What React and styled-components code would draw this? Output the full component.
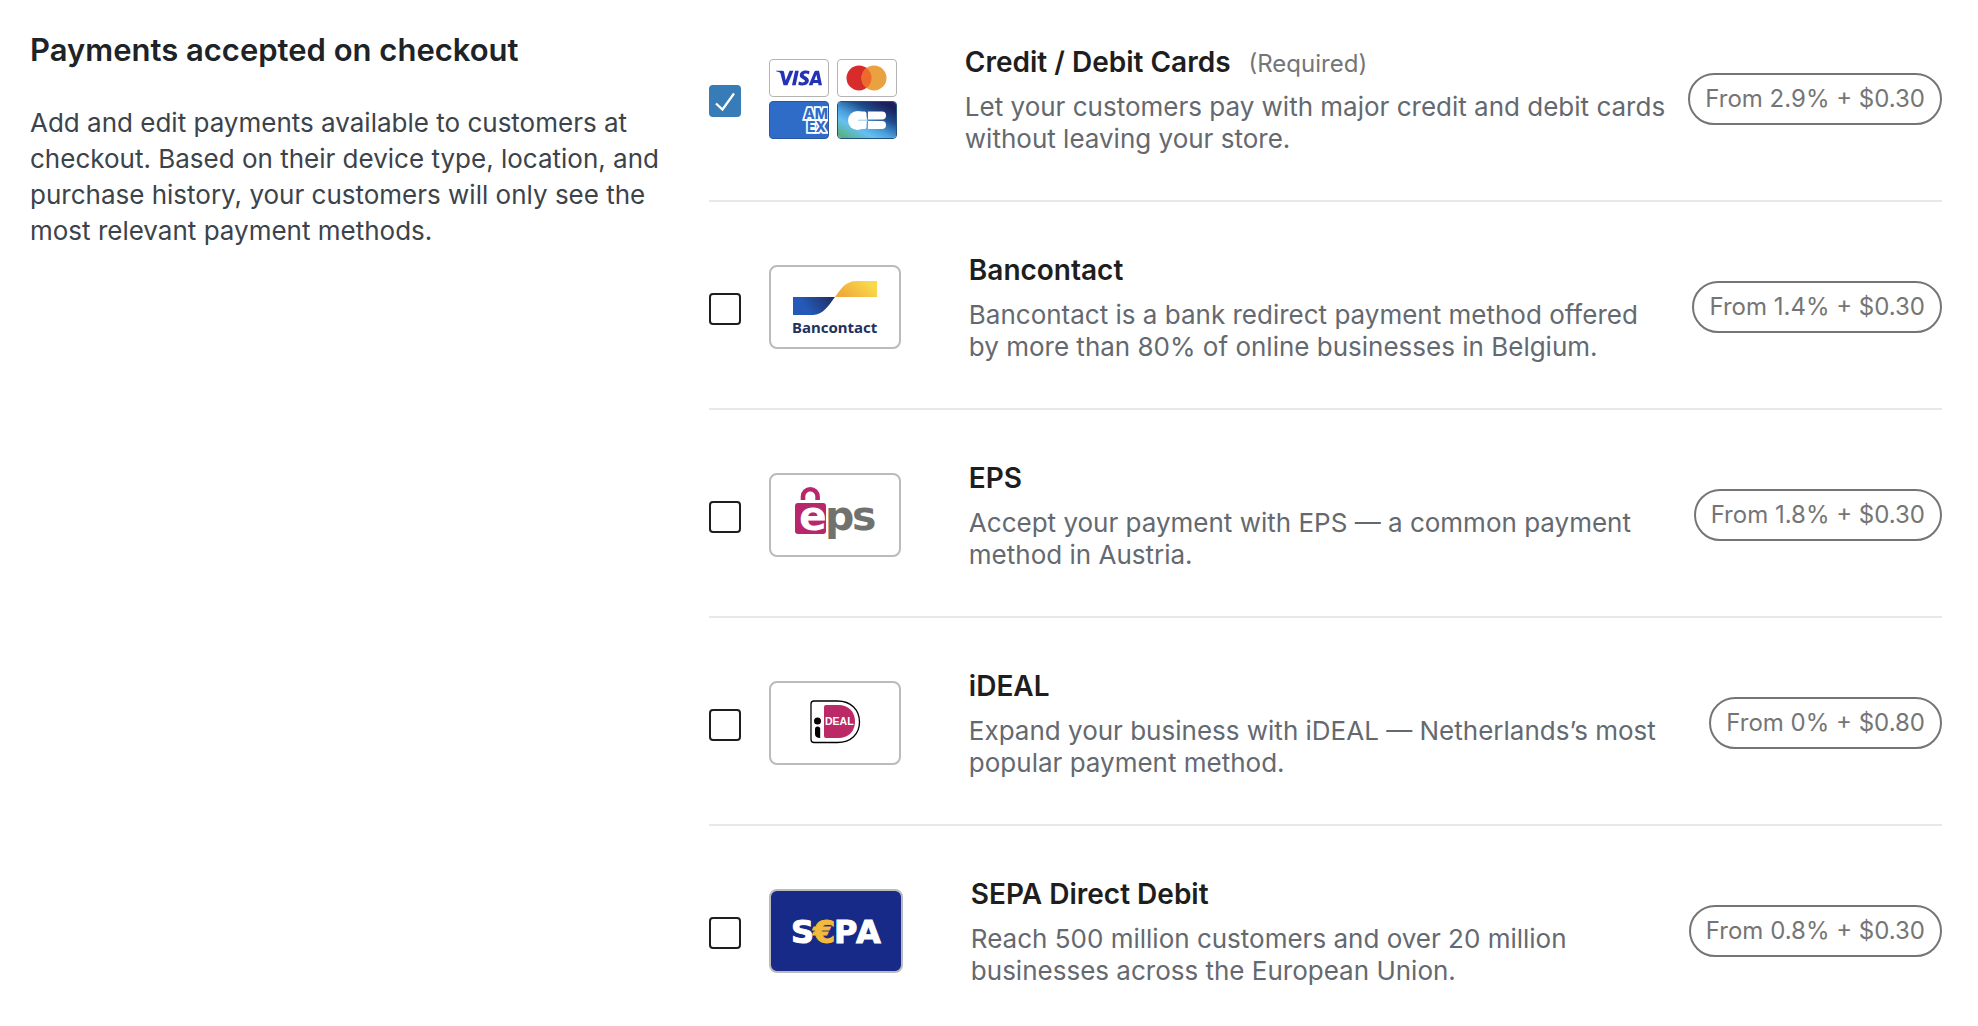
import React, { useState } from 'react';
import styled, { createGlobalStyle } from 'styled-components';
import { SiVisa } from 'react-icons/si';

const GlobalStyle = createGlobalStyle`
  *, *::before, *::after { box-sizing: border-box; }
  body {
    margin: 0;
    background: #fff;
    font-family: Inter, "Liberation Sans", sans-serif;
  }
`;

const Page = styled.main`
  display: grid;
  grid-template-columns: minmax(0, 33fr) minmax(0, 64fr);
  column-gap: 43px;
  padding: 0 36px 0 30px;
`;

const Intro = styled.section`
  padding-top: 28px;
`;

const Heading = styled.h2`
  margin: 0;
  font-size: 31px;
  font-weight: 600;
  line-height: 44px;
  color: #1d2327;
`;

const Lead = styled.p`
  margin: 33px 0 0;
  font-size: 26px;
  line-height: 36px;
  color: #3c434a;
`;

const MethodList = styled.ul`
  margin: 0;
  padding: 0;
  list-style: none;
`;

const MethodRow = styled.li`
  display: flex;
  align-items: center;
  padding: 48px 0 45px;
  border-bottom: 2px solid #e8e8e8;

  &:first-child { padding-top: 42px; }
  &:last-child { padding-bottom: 0; border-bottom: 0; }
`;

const CheckboxWrap = styled.span`
  display: grid;
  flex: none;
  margin: 5px 28px 0 0;

  & > * { grid-area: 1 / 1; }
`;

const Checkbox = styled.input`
  appearance: none;
  width: 32px;
  height: 32px;
  margin: 0;
  border: 2px solid #1e1e1e;
  border-radius: 4px;
  background: #fff;
  cursor: pointer;

  &:checked {
    border-color: #377cb6;
    background: #377cb6;
  }
`;

const CheckMark = styled.svg`
  width: 32px;
  height: 32px;
  pointer-events: none;
`;

const Tile = styled.span`
  flex: none;
  display: block;
  width: ${(p) => (p.$wide ? 134 : 132)}px;
  height: 84px;
  border: 2px solid #bbb;
  border-radius: 8px;
  overflow: hidden;
  background: ${(p) => p.$background || '#fff'};
`;

const TileArt = styled.svg`
  display: block;
  width: 100%;
  height: 100%;
`;

const CardGrid = styled.span`
  flex: none;
  display: grid;
  grid-template-columns: 60px 60px;
  grid-auto-rows: 38px;
  gap: 4px 8px;
`;

const Card = styled.span`
  display: flex;
  align-items: center;
  justify-content: center;
  border: 1px solid ${(p) => p.$border || '#b4b4b4'};
  border-radius: 4px;
  overflow: hidden;
  background: ${(p) => p.$background || '#fff'};
`;

const CardArt = styled.svg`
  display: block;
  width: 100%;
  height: 100%;
`;

const Details = styled.div`
  flex: 1;
  min-width: 0;
  margin: 0 20px 0 68px;
`;

const TitleLine = styled.div`
  display: flex;
  align-items: baseline;
  gap: 18px;
  line-height: 40px;
`;

const Title = styled.label`
  font-size: 28px;
  font-weight: 600;
  color: #1e1e1e;
  cursor: pointer;
`;

const Required = styled.span`
  font-size: 24px;
  line-height: 32px;
  color: #757575;
`;

const Description = styled.p`
  margin: 9px 0 0;
  font-size: 26px;
  line-height: 32px;
  color: #646970;
`;

const Fee = styled.span`
  flex: none;
  padding: 0 15px;
  border: 2px solid #757575;
  border-radius: 26px;
  font-size: 24px;
  line-height: 48px;
  white-space: nowrap;
  color: #757575;
`;

function CardsLogo() {
  return (
    <CardGrid aria-hidden="true">
      <Card>
        <SiVisa size={46} color="#2433b5" />
      </Card>
      <Card>
        <CardArt viewBox="1 1 58 36">
          <clipPath id="mc-left">
            <circle cx="22" cy="19" r="12.5" />
          </clipPath>
          <circle cx="22" cy="19" r="12.5" fill="#d82b2b" />
          <circle cx="37" cy="19" r="12.5" fill="#eaa13f" />
          <circle cx="37" cy="19" r="12.5" fill="#ec6a2c" clipPath="url(#mc-left)" />
        </CardArt>
      </Card>
      <Card $background="#2f6cc8" $border="#2858a4">
        <CardArt viewBox="1 1 58 36">
          <text
            fill="#2f6cc8"
            stroke="#fff"
            strokeWidth="3.4"
            paintOrder="stroke"
            fontFamily="Inter, sans-serif"
            fontWeight="800"
            fontSize="14"
          >
            <tspan x="35" y="18">AM</tspan>
            <tspan x="38" y="31">EX</tspan>
          </text>
        </CardArt>
      </Card>
      <Card $border="#24507f">
        <CardArt viewBox="1 1 58 36">
          <defs>
            <linearGradient id="cb-sky" gradientUnits="userSpaceOnUse" x1="14" y1="43" x2="38" y2="-2">
              <stop offset="0.06" stopColor="#58b184" />
              <stop offset="0.32" stopColor="#66c0f2" />
              <stop offset="0.5" stopColor="#4a9fdb" />
              <stop offset="0.76" stopColor="#1f4c8c" />
              <stop offset="1" stopColor="#1c1f5e" />
            </linearGradient>
          </defs>
          <rect width="60" height="38" fill="url(#cb-sky)" />
          <circle cx="20.5" cy="19.5" r="9.5" fill="#fff" />
          <rect x="20" y="10.5" width="9.5" height="17.5" rx="2" fill="#fff" />
          <path d="M31 10.5h14a4 4 0 0 1 0 8H31z" fill="#fff" />
          <path d="M31 20h14a4 4 0 0 1 0 8H31z" fill="#fff" />
          <rect x="21" y="18.7" width="10" height="1" fill="#8fcdf2" />
        </CardArt>
      </Card>
    </CardGrid>
  );
}

function BancontactLogo() {
  return (
    <Tile aria-hidden="true">
      <TileArt viewBox="2 2 128 80">
        <defs>
          <linearGradient id="bc-blue" x1="0" y1="0.3" x2="1" y2="0">
            <stop offset="0.2" stopColor="#2459b8" />
            <stop offset="1" stopColor="#1f2d5c" />
          </linearGradient>
          <linearGradient id="bc-yellow" x1="0" y1="0.4" x2="1" y2="0">
            <stop offset="0" stopColor="#efac3c" />
            <stop offset="0.8" stopColor="#f9d94a" />
          </linearGradient>
        </defs>
        <path d="M24 32H66C60 40 54 50 44 50H24z" fill="url(#bc-blue)" />
        <path d="M66 32C72 24 76 16 88 16H108V32z" fill="url(#bc-yellow)" />
        <text x="23" y="68" fontFamily="'Noto Sans', sans-serif" fontWeight="700" fontSize="15" fill="#22325f">
          Bancontact
        </text>
      </TileArt>
    </Tile>
  );
}

function EpsLogo() {
  return (
    <Tile aria-hidden="true">
      <TileArt viewBox="2 2 128 80">
        <path d="M34 27V23.5a7.3 7.3 0 0 1 14.6 0V27" fill="none" stroke="#b8266c" strokeWidth="4.6" />
        <rect x="26" y="30" width="31" height="31" rx="3" fill="#b8266c" />
        <text y="57" fontFamily="'DejaVu Sans', sans-serif" fontWeight="700" fontSize="41" fill="#71716f">
          <tspan x="30" fill="#fff">e</tspan>
          <tspan x="56">p</tspan>
          <tspan x="83">s</tspan>
        </text>
      </TileArt>
    </Tile>
  );
}

function IdealLogo() {
  return (
    <Tile aria-hidden="true">
      <TileArt viewBox="2 2 128 80">
        <path
          d="M45 20H68.500C82 20 90.500 29 90.500 41S82 61.500 68.500 61.500H45A3 3 0 0 1 42 58.500V23A3 3 0 0 1 45 20z"
          fill="#fff"
          stroke="#000"
          strokeWidth="1.300"
        />
        <path d="M57 24H69C80 24 86 31 86 40.500S80 57 69 57H57A2 2 0 0 1 55 55V26A2 2 0 0 1 57 24z" fill="#bb2a66" />
        <circle cx="48.500" cy="40" r="3.500" fill="#000" />
        <path d="M46 48A2.500 2.500 0 0 1 51.200 48V57C48 57 46 55.500 46 53z" fill="#000" />
        <text x="56" y="44" fontFamily="'Liberation Sans', sans-serif" fontWeight="700" fontSize="10.500" fill="#fff">
          DEAL
        </text>
      </TileArt>
    </Tile>
  );
}

function SepaLogo() {
  return (
    <Tile $wide $background="#172a87" aria-hidden="true">
      <TileArt viewBox="2 2 130 80">
        <text
          y="54"
          fontFamily="'DejaVu Sans', sans-serif"
          fontWeight="700"
          fontSize="32"
          fill="#fff"
          stroke="#fff"
          strokeWidth="1"
        >
          <tspan x="22">S</tspan>
          <tspan x="44" fill="#f2b93b" stroke="#f2b93b">€</tspan>
          <tspan x="65">P</tspan>
          <tspan x="87">A</tspan>
        </text>
      </TileArt>
    </Tile>
  );
}

const METHODS = [
  {
    id: 'cards',
    title: 'Credit / Debit Cards',
    required: true,
    description: 'Let your customers pay with major credit and debit cards without leaving your store.',
    fee: 'From 2.9% + $0.30',
    Logo: CardsLogo,
  },
  {
    id: 'bancontact',
    title: 'Bancontact',
    description: 'Bancontact is a bank redirect payment method offered by more than 80% of online businesses in Belgium.',
    fee: 'From 1.4% + $0.30',
    Logo: BancontactLogo,
  },
  {
    id: 'eps',
    title: 'EPS',
    description: 'Accept your payment with EPS — a common payment method in Austria.',
    fee: 'From 1.8% + $0.30',
    Logo: EpsLogo,
  },
  {
    id: 'ideal',
    title: 'iDEAL',
    description: 'Expand your business with iDEAL — Netherlands’s most popular payment method.',
    fee: 'From 0% + $0.80',
    Logo: IdealLogo,
  },
  {
    id: 'sepa',
    title: 'SEPA Direct Debit',
    description: 'Reach 500 million customers and over 20 million businesses across the European Union.',
    fee: 'From 0.8% + $0.30',
    Logo: SepaLogo,
  },
];

function PaymentMethod({ method }) {
  const { id, title, required, description, fee, Logo } = method;
  const [enabled, setEnabled] = useState(Boolean(required));

  return (
    <MethodRow>
      <CheckboxWrap>
        <Checkbox
          type="checkbox"
          id={id}
          checked={enabled}
          onChange={(e) => setEnabled(required || e.target.checked)}
        />
        {enabled && (
          <CheckMark viewBox="0 0 32 32" aria-hidden="true">
            <path d="M7 18.500L13.500 24.500L25 8.500" fill="none" stroke="#fff" strokeWidth="2.300" />
          </CheckMark>
        )}
      </CheckboxWrap>
      <Logo />
      <Details>
        <TitleLine>
          <Title htmlFor={id}>{title}</Title>
          {required && <Required>(Required)</Required>}
        </TitleLine>
        <Description>{description}</Description>
      </Details>
      <Fee>{fee}</Fee>
    </MethodRow>
  );
}

export default function App() {
  return (
    <>
      <GlobalStyle />
      <Page>
        <Intro>
          <Heading>Payments accepted on checkout</Heading>
          <Lead>
            Add and edit payments available to customers at checkout. Based on their device type,
            location, and purchase history, your customers will only see the most relevant payment
            methods.
          </Lead>
        </Intro>
        <MethodList>
          {METHODS.map((method) => (
            <PaymentMethod key={method.id} method={method} />
          ))}
        </MethodList>
      </Page>
    </>
  );
}
